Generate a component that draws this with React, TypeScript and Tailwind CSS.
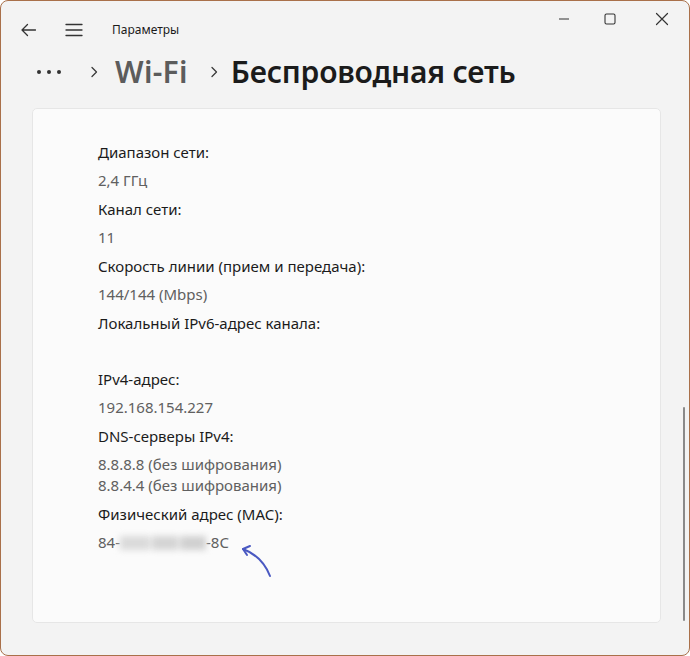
import React from "react";

const font = { fontFamily: '"Noto Sans", "Open Sans", sans-serif' };

function Chevron() {
  return (
    <svg width="10" height="14" viewBox="0 0 10 14" fill="none">
      <path d="M3 2.5 L7.5 7 L3 11.5" stroke="#3a3a3a" strokeWidth="1.3" strokeLinecap="round" strokeLinejoin="round" />
    </svg>
  );
}

function Label({ children }: { children: React.ReactNode }) {
  return <div className="h-[28px] leading-[28px] text-[15px] text-[#1b1b1b]">{children}</div>;
}

function Values({ items }: { items: React.ReactNode[] }) {
  return (
    <div className="py-[4px]">
      {items.map((v, i) => (
        <div key={i} className="h-[21px] leading-[21px] text-[15px] text-[#606060]">
          {v}
        </div>
      ))}
    </div>
  );
}

export default function App() {
  return (
    <div
      className="w-[690px] h-[656px] bg-[#f3f3f3] border border-[#a9704a] rounded-[8px] flex flex-col overflow-hidden relative"
      style={font}
    >
      {/* Title bar */}
      <div className="h-[50px] flex items-start justify-between">
        <div className="flex items-center h-[57px] pl-[19px]">
          <svg width="17" height="16" viewBox="0 0 17 16" fill="none">
            <path d="M15.5 8 H2 M7.5 2.5 L2 8 L7.5 13.5" stroke="#333" strokeWidth="1.3" strokeLinecap="round" strokeLinejoin="round" />
          </svg>
          <svg className="ml-[28px]" width="18" height="14" viewBox="0 0 18 14" fill="none">
            <path d="M1 1.5 H17 M1 7 H17 M1 12.5 H17" stroke="#333" strokeWidth="1.3" strokeLinecap="round" />
          </svg>
          <span className="ml-[29px] text-[12px] text-[#1b1b1b]">Параметры</span>
        </div>
        <div className="flex items-center h-[36px]">
          <div className="w-[46px] flex justify-center">
            <svg width="12" height="2" viewBox="0 0 12 2"><path d="M1 1 H11" stroke="#333" strokeWidth="1.2" /></svg>
          </div>
          <div className="w-[46px] flex justify-center ml-[0px]">
            <svg width="12" height="12" viewBox="0 0 12 12" fill="none">
              <rect x="1" y="1" width="10" height="10" rx="1.5" stroke="#333" strokeWidth="1.1" />
            </svg>
          </div>
          <div className="w-[46px] flex justify-center mr-[4px] ml-[6px]">
            <svg width="14" height="14" viewBox="0 0 14 14" fill="none">
              <path d="M1.5 1.5 L12.5 12.5 M12.5 1.5 L1.5 12.5" stroke="#333" strokeWidth="1.2" strokeLinecap="round" />
            </svg>
          </div>
        </div>
      </div>

      {/* Breadcrumb */}
      <div className="h-[42px] flex items-center pl-[36px]">
        <div className="flex items-center gap-[6px] w-[26px]">
          <span className="w-[4px] h-[4px] rounded-full bg-[#333]" />
          <span className="w-[4px] h-[4px] rounded-full bg-[#333]" />
          <span className="w-[4px] h-[4px] rounded-full bg-[#333]" />
        </div>
        <div className="ml-[26px]"><Chevron /></div>
        <span className="ml-[16px] text-[30px] font-semibold text-[#5c5c5c] leading-none tracking-[0.3px]">Wi-Fi</span>
        <div className="ml-[21px]"><Chevron /></div>
        <span className="ml-[12px] text-[30px] font-semibold text-[#1b1b1b] leading-none tracking-[-0.2px]">Беспроводная сеть</span>
      </div>

      {/* Card */}
      <div className="mt-[15px] ml-[31px] mr-[28px] h-[515px] bg-[#fbfbfb] border border-[#e6e6e6] rounded-[5px] pt-[29px] pl-[65px]">
        <Label>Диапазон сети:</Label>
        <Values items={["2,4 ГГц"]} />
        <Label>Канал сети:</Label>
        <Values items={["11"]} />
        <Label>Скорость линии (прием и передача):</Label>
        <Values items={["144/144 (Mbps)"]} />
        <Label>Локальный IPv6-адрес канала:</Label>
        <div className="h-[28px]" />
        <Label>IPv4-адрес:</Label>
        <Values items={["192.168.154.227"]} />
        <Label>DNS-серверы IPv4:</Label>
        <Values items={["8.8.8.8 (без шифрования)", "8.8.4.4 (без шифрования)"]} />
        <Label>Физический адрес (MAC):</Label>
        <Values
          items={[
            <span className="flex items-center" key="mac">
              84-
              <span className="flex items-center gap-[2px] blur-[3px]">
                <span className="w-[30px] h-[14px] bg-[#dadada]" />
                <span className="w-[26px] h-[14px] bg-[#d4d4d4]" />
                <span className="w-[26px] h-[14px] bg-[#d0d0d0]" />
              </span>
              -8C
            </span>,
          ]}
        />
      </div>

      {/* Hand-drawn arrow annotation */}
      <svg className="absolute left-[234px] top-[539px]" width="40" height="40" viewBox="0 0 40 40" fill="none">
        <path d="M35 36 C31 26 24 15 8 9" stroke="#4a59c2" strokeWidth="2" strokeLinecap="round" fill="none" />
        <path d="M8 9 L15 6 M8 9 L12 15" stroke="#4a59c2" strokeWidth="2" strokeLinecap="round" />
      </svg>

      {/* Scrollbar */}
      <div className="absolute right-[4px] top-[406px] w-[2px] h-[214px] rounded-full bg-[#8a8a8a]" />
    </div>
  );
}
